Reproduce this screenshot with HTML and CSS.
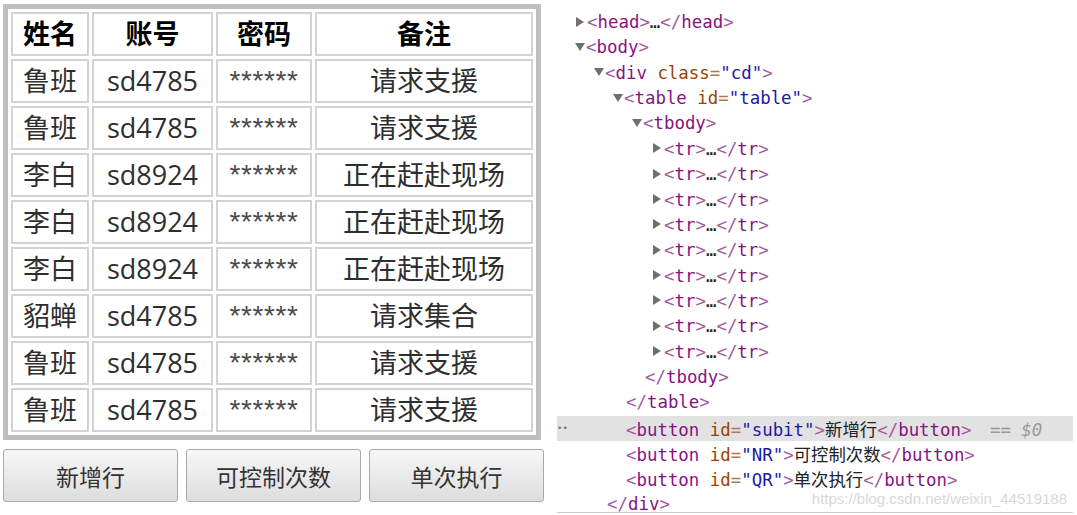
FILE: index.html
```html
<!DOCTYPE html>
<html lang="zh">
<head>
<meta charset="utf-8">
<link rel="stylesheet" href="styles.css">
</head>
<body>
<div class="page">
  <div class="left">
    <table class="grid">
      <tr><th class="c1">姓名</th><th class="c2">账号</th><th class="c3">密码</th><th class="c4">备注</th></tr>
      <tr><td>鲁班</td><td>sd4785</td><td class="pw">******</td><td>请求支援</td></tr>
      <tr><td>鲁班</td><td>sd4785</td><td class="pw">******</td><td>请求支援</td></tr>
      <tr><td>李白</td><td>sd8924</td><td class="pw">******</td><td>正在赶赴现场</td></tr>
      <tr><td>李白</td><td>sd8924</td><td class="pw">******</td><td>正在赶赴现场</td></tr>
      <tr><td>李白</td><td>sd8924</td><td class="pw">******</td><td>正在赶赴现场</td></tr>
      <tr><td>貂蝉</td><td>sd4785</td><td class="pw">******</td><td>请求集合</td></tr>
      <tr><td>鲁班</td><td>sd4785</td><td class="pw">******</td><td>请求支援</td></tr>
      <tr><td>鲁班</td><td>sd4785</td><td class="pw">******</td><td>请求支援</td></tr>
    </table>
    <div class="buttons">
      <button class="btn">新增行</button>
      <button class="btn">可控制次数</button>
      <button class="btn">单次执行</button>
    </div>
  </div>
  <div class="devtools">
    <div class="line l0"><span class="tri right"></span><span class="b">&lt;</span><span class="t">head</span><span class="b">&gt;</span>…<span class="b">&lt;/</span><span class="t">head</span><span class="b">&gt;</span></div>
    <div class="line l0"><span class="tri down"></span><span class="b">&lt;</span><span class="t">body</span><span class="b">&gt;</span></div>
    <div class="line l1"><span class="tri down"></span><span class="b">&lt;</span><span class="t">div</span> <span class="an">class</span><span class="eq">=</span><span class="av">"cd"</span><span class="b">&gt;</span></div>
    <div class="line l2"><span class="tri down"></span><span class="b">&lt;</span><span class="t">table</span> <span class="an">id</span><span class="eq">=</span><span class="av">"table"</span><span class="b">&gt;</span></div>
    <div class="line l3"><span class="tri down"></span><span class="b">&lt;</span><span class="t">tbody</span><span class="b">&gt;</span></div>
    <div class="line l4"><span class="tri right"></span><span class="b">&lt;</span><span class="t">tr</span><span class="b">&gt;</span>…<span class="b">&lt;/</span><span class="t">tr</span><span class="b">&gt;</span></div>
    <div class="line l4"><span class="tri right"></span><span class="b">&lt;</span><span class="t">tr</span><span class="b">&gt;</span>…<span class="b">&lt;/</span><span class="t">tr</span><span class="b">&gt;</span></div>
    <div class="line l4"><span class="tri right"></span><span class="b">&lt;</span><span class="t">tr</span><span class="b">&gt;</span>…<span class="b">&lt;/</span><span class="t">tr</span><span class="b">&gt;</span></div>
    <div class="line l4"><span class="tri right"></span><span class="b">&lt;</span><span class="t">tr</span><span class="b">&gt;</span>…<span class="b">&lt;/</span><span class="t">tr</span><span class="b">&gt;</span></div>
    <div class="line l4"><span class="tri right"></span><span class="b">&lt;</span><span class="t">tr</span><span class="b">&gt;</span>…<span class="b">&lt;/</span><span class="t">tr</span><span class="b">&gt;</span></div>
    <div class="line l4"><span class="tri right"></span><span class="b">&lt;</span><span class="t">tr</span><span class="b">&gt;</span>…<span class="b">&lt;/</span><span class="t">tr</span><span class="b">&gt;</span></div>
    <div class="line l4"><span class="tri right"></span><span class="b">&lt;</span><span class="t">tr</span><span class="b">&gt;</span>…<span class="b">&lt;/</span><span class="t">tr</span><span class="b">&gt;</span></div>
    <div class="line l4"><span class="tri right"></span><span class="b">&lt;</span><span class="t">tr</span><span class="b">&gt;</span>…<span class="b">&lt;/</span><span class="t">tr</span><span class="b">&gt;</span></div>
    <div class="line l4"><span class="tri right"></span><span class="b">&lt;</span><span class="t">tr</span><span class="b">&gt;</span>…<span class="b">&lt;/</span><span class="t">tr</span><span class="b">&gt;</span></div>
    <div class="line l3"><span class="b">&lt;/</span><span class="t">tbody</span><span class="b">&gt;</span></div>
    <div class="line l2"><span class="b">&lt;/</span><span class="t">table</span><span class="b">&gt;</span></div>
    <div class="line l2 sel"><span class="dots">••</span><span class="b">&lt;</span><span class="t">button</span> <span class="an">id</span><span class="eq">=</span><span class="av">"subit"</span><span class="b">&gt;</span><span class="zh">新增行</span><span class="b">&lt;/</span><span class="t">button</span><span class="b">&gt;</span> <span class="dollar">== $0</span></div>
    <div class="line l2"><span class="b">&lt;</span><span class="t">button</span> <span class="an">id</span><span class="eq">=</span><span class="av">"NR"</span><span class="b">&gt;</span><span class="zh">可控制次数</span><span class="b">&lt;/</span><span class="t">button</span><span class="b">&gt;</span></div>
    <div class="line l2"><span class="b">&lt;</span><span class="t">button</span> <span class="an">id</span><span class="eq">=</span><span class="av">"QR"</span><span class="b">&gt;</span><span class="zh">单次执行</span><span class="b">&lt;/</span><span class="t">button</span><span class="b">&gt;</span></div>
    <div class="line l1 last"><span class="b">&lt;/</span><span class="t">div</span><span class="b">&gt;</span></div>
    <div class="watermark">https://blog.csdn.net/weixin_44519188</div>
  </div>
</div>
</body>
</html>
```
FILE: styles.css
```css
html, body {
  margin: 0;
  padding: 0;
  background: #ffffff;
}

.page {
  display: flex;
  width: 1077px;
  height: 515px;
  overflow: hidden;
}

.left {
  width: 554px;
  flex: none;
  padding: 4px 0 0 3px;
  box-sizing: border-box;
}

.grid {
  border-collapse: separate;
  border-spacing: 3px;
  border: 5px solid #bfbfbf;
  width: 538px;
  table-layout: fixed;
}

.grid th,
.grid td {
  border: 2px solid #d3d3d3;
  padding: 0;
  height: 40px;
  line-height: 40px;
  text-align: center;
  font-family: "Open Sans", "Noto Sans CJK SC", sans-serif;
  font-size: 27px;
  color: #2e2e2e;
  white-space: nowrap;
  overflow: hidden;
}

.grid th {
  font-weight: bold;
  color: #000000;
}

.grid .c1 { width: 74px; }
.grid .c2 { width: 117px; }
.grid .c3 { width: 92px; }
.grid .c4 { width: 214px; }

.grid .pw {
  font-family: "Liberation Sans", sans-serif;
  font-size: 28px;
  letter-spacing: 0.6px;
  color: #4a4a4a;
}

.buttons {
  display: flex;
  gap: 8px;
  margin-top: 9px;
}

.btn {
  width: 175px;
  height: 53px;
  flex: none;
  border: 1px solid #a8a8a8;
  border-radius: 3px;
  background: linear-gradient(#f7f7f7, #dddddd);
  font-family: "Noto Sans CJK SC", sans-serif;
  font-size: 23px;
  color: #333333;
  padding: 0;
}

.devtools {
  position: relative;
  width: 516px;
  height: 513px;
  margin-left: 3px;
  padding-top: 10px;
  box-sizing: border-box;
  border-bottom: 1px solid #cccccc;
  overflow: hidden;
  font-family: "DejaVu Sans Mono", monospace;
  font-size: 17.4px;
  color: #222222;
}

.line {
  position: relative;
  height: 25.37px;
  line-height: 25.37px;
  white-space: nowrap;
}

.line.last {
  height: 18px;
  line-height: 18px;
  padding-top: 3px;
}

.l0 { padding-left: 31px; }
.l1 { padding-left: 50px; }
.l2 { padding-left: 69px; }
.l3 { padding-left: 88px; }
.l4 { padding-left: 108px; }

.tri {
  display: inline-block;
  width: 0;
  height: 0;
  margin-left: -12px;
  margin-right: 3px;
  vertical-align: middle;
}

.tri.right {
  border-left: 8px solid #6f6f6f;
  border-top: 5px solid transparent;
  border-bottom: 5px solid transparent;
  margin-top: -3px;
}

.tri.down {
  border-top: 8px solid #6f6f6f;
  border-left: 5px solid transparent;
  border-right: 5px solid transparent;
  margin-left: -13px;
  margin-right: 1px;
  margin-top: -3px;
}

.b { color: #a35b9e; }
.t { color: #881280; }
.an { color: #994500; }
.eq { color: #b07b52; }
.av { color: #1a1aa6; }

.zh {
  font-family: "Noto Sans CJK SC", sans-serif;
  color: #222222;
}

.sel {
  background: #e2e2e2;
}

.dots {
  position: absolute;
  left: 0;
  top: 0;
  font-size: 9px;
  color: #777777;
}

.dollar {
  color: #999999;
  font-style: italic;
  margin-left: 8px;
}

.watermark {
  position: absolute;
  right: 6px;
  bottom: 5px;
  font-family: "Liberation Sans", sans-serif;
  font-size: 15px;
  color: #d8d8d8;
  white-space: nowrap;
}
```
